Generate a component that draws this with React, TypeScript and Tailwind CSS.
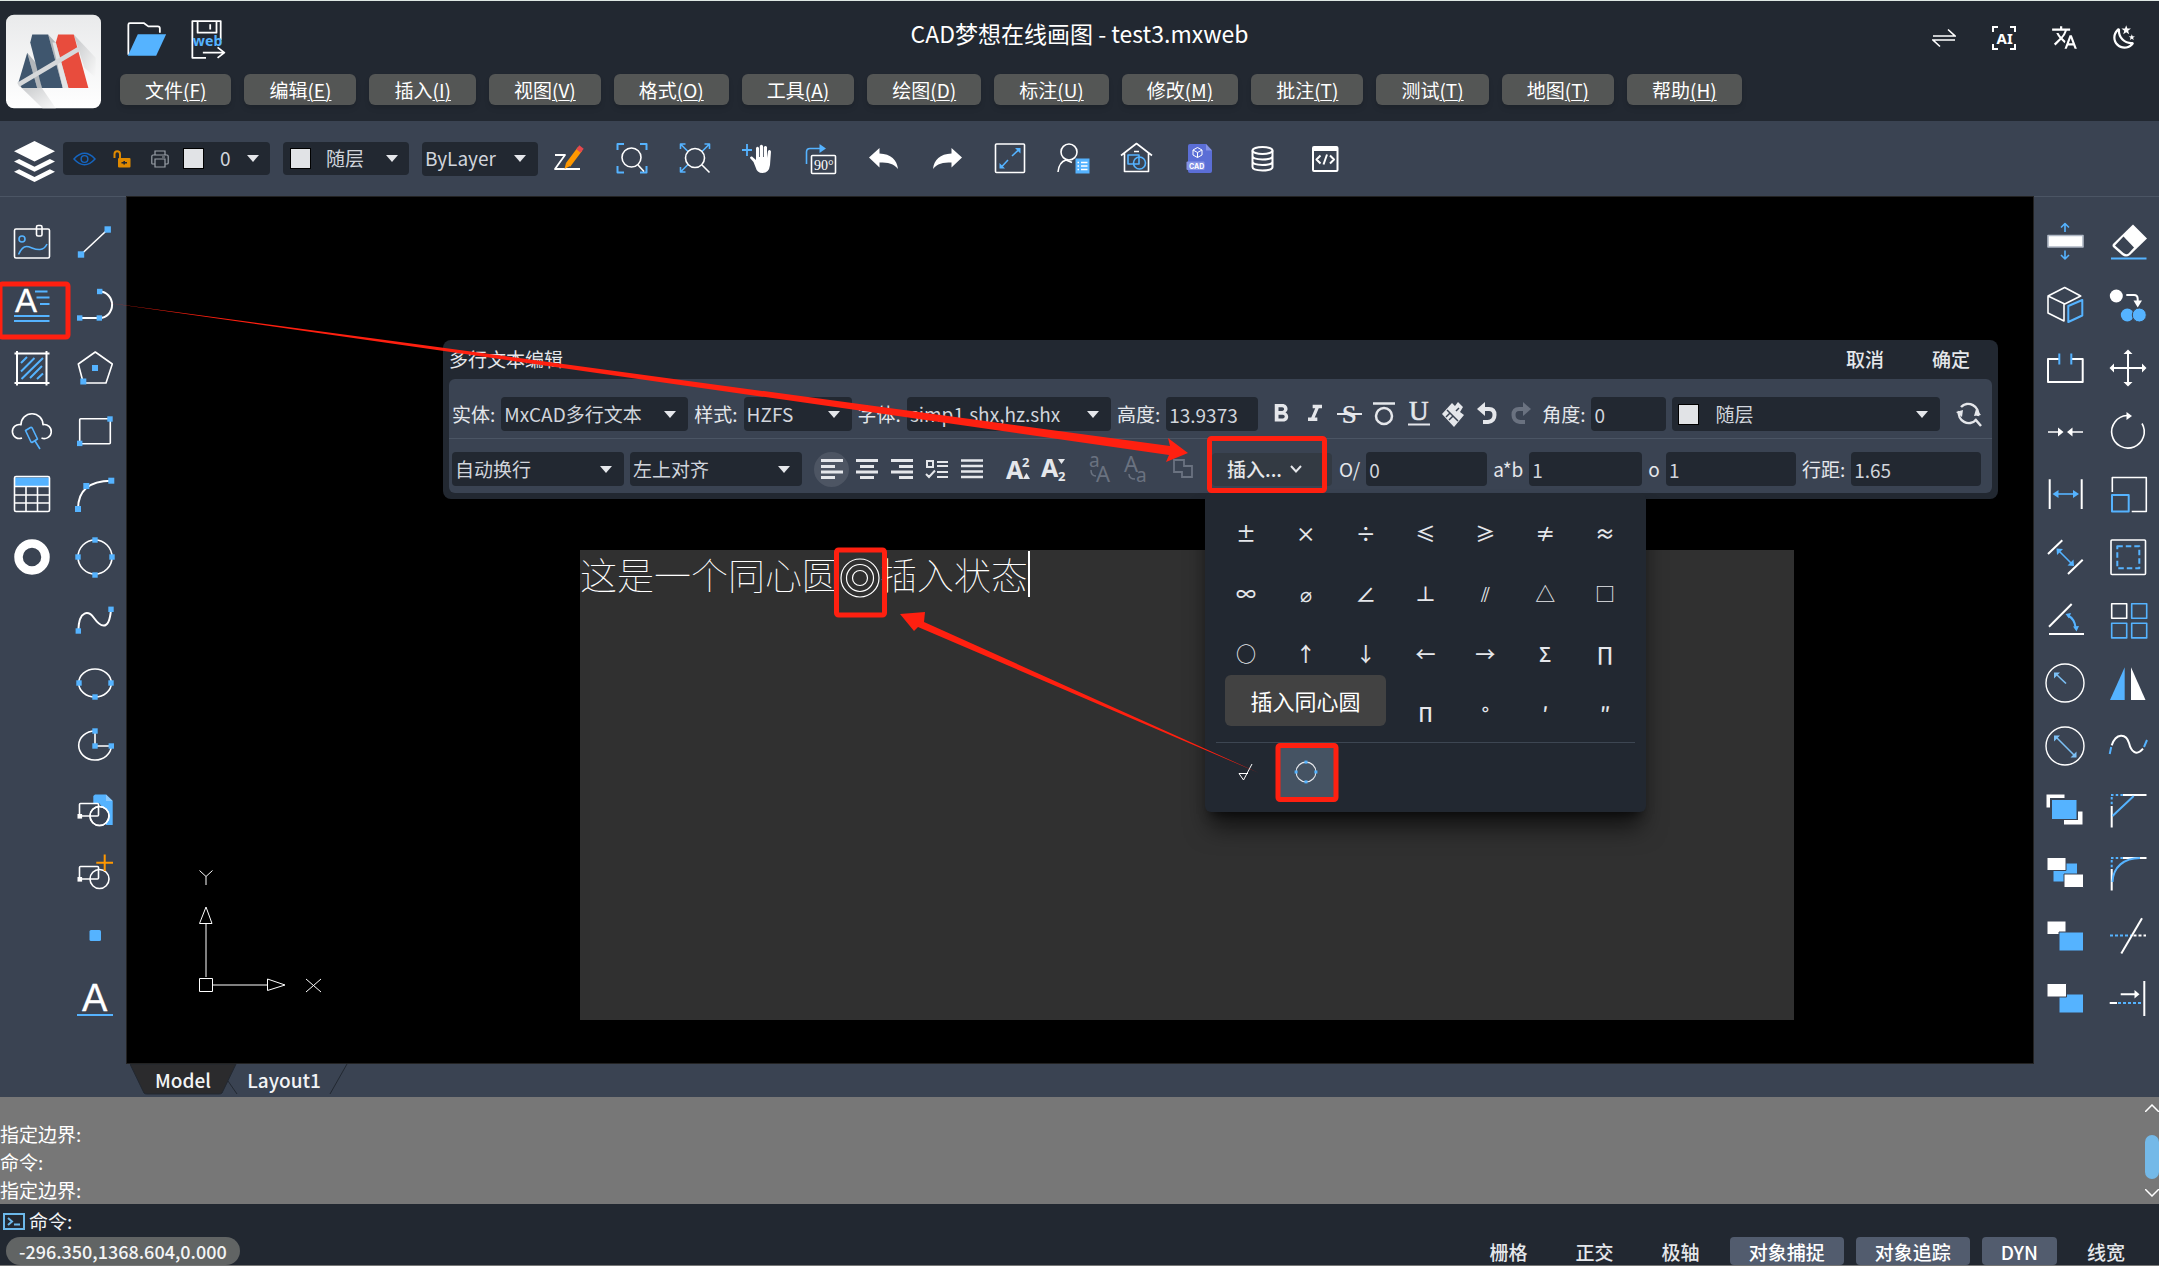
import type { ReactNode } from 'react';
import { MdFormatBold, MdFormatItalic, MdTranslate } from 'react-icons/md';
import clsx from 'clsx';

const BLUE = '#55b3ff';
const PANEL = '#3a4352';

function Icon({ children, className = 'size-10' }: { children: ReactNode; className?: string }) {
  return (
    <svg viewBox="0 0 40 40" className={clsx('shrink-0 overflow-visible', className)} fill="none" stroke="currentColor" strokeWidth="1.6" strokeLinejoin="round" aria-hidden="true">
      {children}
    </svg>
  );
}

// grip squares drawn at the key points of a shape
function Grips({ at, size = 5.4 }: { at: number[][]; size?: number }) {
  return (
    <g fill={BLUE} stroke="none">
      {at.map(([x, y]) => (
        <rect key={`${x}-${y}`} x={x - size / 2} y={y - size / 2} width={size} height={size} />
      ))}
    </g>
  );
}

function Caret() {
  return (
    <svg viewBox="0 0 12 7" className="pointer-events-none h-[7px] w-3 shrink-0 fill-gray-200" aria-hidden="true">
      <path d="M0 0H12L6 7Z" />
    </svg>
  );
}

const menus = [
  ['文件', 'F'],
  ['编辑', 'E'],
  ['插入', 'I'],
  ['视图', 'V'],
  ['格式', 'O'],
  ['工具', 'A'],
  ['绘图', 'D'],
  ['标注', 'U'],
  ['修改', 'M'],
  ['批注', 'T'],
  ['测试', 'T'],
  ['地图', 'T'],
  ['帮助', 'H'],
];

const blockShape = (
  <>
    <rect x="4.5" y="14.5" width="19" height="12.5" rx="1" />
    <circle cx="24.5" cy="27" r="9.5" />
    <rect x="2.5" y="25" width="4.6" height="4.6" fill="white" stroke="none" />
  </>
);

const leftCol = [
  {
    name: '图像',
    icon: (
      <>
        <rect x="2.5" y="7" width="35" height="29" rx="1.5" />
        <rect x="24.5" y="3.5" width="5.5" height="10.5" rx="1.5" />
        <g stroke={BLUE}>
          <circle cx="10" cy="17" r="3" />
          <path d="M6.5 32.5C9 27 11 24.5 14.5 24.5C19 24.5 22 28 28 27.5C33 27 34 24 35 22" />
        </g>
      </>
    ),
  },
  {
    name: '多行文字',
    icon: (
      <>
        <text x="3" y="27" fontSize="33" fontFamily="Liberation Sans" fill="white" stroke="white" strokeWidth="0.3">A</text>
        <path stroke={BLUE} strokeWidth="1.9" d="M23 6.5H35.5M24.5 12.5H37.5M28 19H37.5M2 31H37.5M2 36H37.5" />
      </>
    ),
  },
  {
    name: '填充',
    icon: (
      <>
        <path strokeWidth="2" d="M5 3V37.5M34.5 3V37.5M2.5 5.5H37.5M2.5 35H37.5" />
        <path stroke={BLUE} strokeWidth="2" d="M9 15L15 9M9 23.5L22.5 10M9.5 31L31 10M18 30L30 18M25 31L31 25.5" />
      </>
    ),
  },
  {
    name: '云线',
    icon: (
      <>
        <path d="M10 27A7 7 0 1 1 9 13.7A11 11 0 0 1 31 13.7A7 7 0 1 1 29.5 27" />
        <path stroke={BLUE} d="M13.5 19.5L18.5 16.5Q19.5 16.2 20.2 17L25.5 28L20 31.5L19 31ZM23 30L28 38" />
      </>
    ),
  },
  {
    name: '表格',
    icon: (
      <>
        <rect x="3" y="3.5" width="34" height="9" fill={BLUE} stroke="none" />
        <rect x="2.5" y="2.5" width="35" height="35" rx="1.5" />
        <path d="M2.5 12.5H37.5M2.5 21H37.5M2.5 29H37.5M14 12.5V37.5M25.5 12.5V37.5" />
      </>
    ),
  },
  { name: '圆环', icon: <circle cx="20" cy="20" r="13.5" strokeWidth="8.5" /> },
];

const drawCol = [
  { name: '直线', icon: <><path d="M6 32.5L32.7 7.5" /><Grips at={[[6, 32.5], [32.7, 7.5]]} size={6.4} /></> },
  { name: '多段线', icon: <><path strokeWidth="2" d="M4.7 33H24.5A12.5 13.25 0 0 0 24.7 6.5" /><Grips at={[[4.7, 33], [24.3, 33], [24.7, 6.5]]} /></> },
  { name: '多边形', icon: <><path d="M20.3 4L37.3 16L31 35H8.3L3.3 16Z" /><Grips at={[[20, 20], [8.3, 33.5]]} size={6} /></> },
  { name: '矩形', icon: <><rect x="4.7" y="7.7" width="30.6" height="25" rx="1" /><Grips at={[[35, 8], [4.7, 32.4]]} /></> },
  { name: '圆弧', icon: <><path strokeWidth="2" d="M3 35Q3 7 36.3 6.7" /><Grips at={[[3, 35], [11.3, 12], [36.3, 6.7]]} size={6} /></> },
  { name: '圆', icon: <><circle cx="20" cy="20" r="17" /><Grips at={[[3, 20], [20, 3], [37, 20], [20, 38]]} /></> },
  { name: '样条曲线', icon: <><path strokeWidth="2" d="M3.3 30.7C4 9 14 11 19 18S34 34 36 9.3" /><Grips at={[[3.3, 31], [36, 9.3]]} /></> },
  { name: '椭圆', icon: <><ellipse cx="20" cy="20" rx="16.3" ry="14" /><Grips at={[[4, 20], [36, 20], [20, 34]]} /></> },
  { name: '椭圆弧', icon: <><path d="M20 5A16.3 14.5 0 1 0 36.3 20H20Z" /><Grips at={[[20, 5], [20, 20], [36.3, 20]]} /></> },
  {
    name: '插入块',
    icon: (
      <>
        <path fill={BLUE} stroke="none" d="M20 5.5H31L37.7 12V36H31L30 33L34 27L24 14H18.3V7Z" />
        <path fill="#8cc9fb" stroke="none" d="M31 5.5L37.7 12H31Z" />
        <circle cx="24.5" cy="27" r="9.5" fill={PANEL} />
        {blockShape}
      </>
    ),
  },
  { name: '创建块', icon: <>{blockShape}<path stroke="#ff9800" strokeWidth="2" d="M21.3 10.7H38M29.7 2.5V19" /></> },
  { name: '点', icon: <rect x="14.5" y="15" width="11.5" height="11" rx="1.5" fill={BLUE} stroke="none" /> },
  {
    name: '单行文字',
    icon: (
      <>
        <text x="7" y="32.5" fontSize="38" fontFamily="Liberation Sans" fill="white" stroke="white" strokeWidth="0.3">A</text>
        <path stroke={BLUE} strokeWidth="2" d="M2 37H38" />
      </>
    ),
  },
];

const modifyCol = [
  {
    name: '拉伸',
    icon: (
      <>
        <rect x="3" y="13.5" width="35" height="11.5" fill="white" stroke="#aeb7c4" />
        <path stroke={BLUE} d="M20 10V1.5M16 5.5L20 1.5L24 5.5M20 28.5V37M16 33L20 37L24 33" />
      </>
    ),
  },
  { name: '三维', icon: <><path d="M19.7 2.5L35.7 11L19.7 19L3 11ZM3 11V28L19 36V19" /><path stroke={BLUE} strokeWidth="2" d="M23.3 21L37.3 15V30.5L23.3 37Z" /></> },
  { name: '打断', icon: <><path strokeWidth="2" d="M14.3 11H3V34H37.7V11H26.3" /><path stroke={BLUE} strokeWidth="2" d="M14.3 5.5V16.5M26.3 5.5V16.5" /></> },
  { name: '合并', icon: <><path d="M3 21H14M38 21H26" /><path fill="white" stroke="none" d="M13 16.5L18.5 21L13 25.5ZM27.5 16.5L22 21L27.5 25.5Z" /></> },
  { name: '线性标注', icon: <><path strokeWidth="2" d="M4.7 5.3V35M36.7 5.3V35" /><path stroke={BLUE} d="M12 20H30" /><path fill={BLUE} stroke="none" d="M13.5 16L7.5 20L13.5 24ZM28 16L34 20L28 24Z" /></> },
  { name: '对齐标注', icon: <><path strokeWidth="2" d="M3 17L17.3 3.3M23 37L37.7 22.7" /><path stroke={BLUE} d="M13 13L27 27" /><path fill={BLUE} stroke="none" d="M11.5 11.5L18 12L12 18ZM29 29L28.5 22.5L22.5 28.5Z" /></> },
  { name: '角度标注', icon: <><path strokeWidth="2" d="M4 26.7L26.7 4M4 34H39" /><path stroke={BLUE} strokeWidth="2" d="M23 15.5C28 18 30 22 30.7 28" /><path fill={BLUE} stroke="none" d="M20.5 14L26 13L24 18.5ZM31.5 31.5L28 26.5L34 26Z" /></> },
  { name: '半径标注', icon: <><circle cx="20" cy="20" r="19" strokeWidth="1.4" /><path stroke="#7cc0f5" d="M21 20.5L12 12" /><path fill="#7cc0f5" stroke="none" d="M9 9.5H15L9 15.5Z" /></> },
  { name: '直径标注', icon: <><circle cx="20" cy="20" r="19" strokeWidth="1.4" /><path stroke="#7cc0f5" d="M12 12L29 29" /><path fill="#7cc0f5" stroke="none" d="M9 9.5H15L9 15.5ZM31.5 31.5V25.5L25.5 31.5Z" /></> },
  { name: '前置', icon: <g stroke={PANEL} strokeWidth="1"><rect x="1" y="5" width="19" height="14" fill="white" /><rect x="18.5" y="22" width="19.5" height="14" fill="white" /><rect x="5" y="9" width="28" height="22" fill={PANEL} stroke="none" /><rect x="7" y="11" width="24.5" height="19" fill={BLUE} stroke="none" /></g> },
  { name: '后置', icon: <g stroke={PANEL} strokeWidth="1"><rect x="8" y="11" width="24.5" height="19" fill={BLUE} /><rect x="2" y="5.5" width="19" height="13" fill="white" /><rect x="19" y="22" width="19.5" height="13.5" fill="white" /></g> },
  { name: '置于对象之上', icon: <g stroke={PANEL} strokeWidth="1"><rect x="2" y="6" width="19" height="13.5" fill="white" /><rect x="14" y="17" width="24.5" height="19" fill={BLUE} /></g> },
  { name: '置于对象之下', icon: <g stroke={PANEL} strokeWidth="1"><rect x="14" y="16" width="24.5" height="19" fill={BLUE} /><rect x="2" y="5.5" width="19.5" height="13.5" fill="white" /></g> },
];

const cornerLines = (
  <>
    <path strokeWidth="2" d="M15 6H38.5M3.7 17V38.5" />
    <path stroke={BLUE} strokeWidth="2" strokeDasharray="2.5 2.2" d="M3 6H15M3.7 8V17" />
  </>
);

const editCol = [
  {
    name: '删除',
    icon: (
      <>
        <path fill="white" stroke="none" d="M25 2.5L39 16.5L22 33Q18 36 14 33L5 25Q4 23.5 5 22Z" />
        <path fill={PANEL} stroke="none" d="M15.5 14.5L26 25.5L20.5 31.5Q18 33 15.5 31L7 23.5Z" />
        <path stroke={BLUE} strokeWidth="2" d="M3 36.5H38.5" />
      </>
    ),
  },
  {
    name: '复制',
    icon: (
      <>
        <circle cx="8.3" cy="11" r="6.5" fill="white" stroke="none" />
        <path strokeWidth="2" d="M18.3 10H26Q29.7 10 29.7 14V17" />
        <path fill="white" stroke="none" d="M25.5 15.5H34L29.7 22.5Z" />
        <circle cx="19.3" cy="30" r="6.5" fill={BLUE} stroke="none" />
        <circle cx="31.3" cy="30" r="7" fill={BLUE} stroke={PANEL} strokeWidth="1" />
      </>
    ),
  },
  { name: '移动', icon: <><path strokeWidth="2" d="M4 20H36M20 4V36" /><path fill="white" stroke="none" d="M1.5 20L6 15.5V24.5ZM38.5 20L34 15.5V24.5ZM20 1.5L15.5 6H24.5ZM20 38.5L15.5 34H24.5Z" /></> },
  { name: '旋转', icon: <><path d="M19 4.5A16.3 16.3 0 1 0 34 12.5" /><path fill="white" stroke="none" d="M18.5 1L24 5L18.5 9Z" /></> },
  { name: '缩放', icon: <><path d="M4.3 18V3.5H38.3V37.5H23.7" /><rect x="4" y="21" width="16.7" height="16.5" stroke={BLUE} strokeWidth="2" /></> },
  { name: '选择', icon: <><rect x="3" y="3" width="34.5" height="34.5" rx="1" /><rect x="9.3" y="9.3" width="22" height="22" stroke={BLUE} strokeWidth="2" strokeDasharray="5.5 3" /></> },
  { name: '阵列', icon: <><rect x="3.7" y="3.7" width="15" height="14.6" /><g stroke={BLUE}><rect x="23.7" y="3.7" width="15" height="14.6" /><rect x="3.7" y="23.3" width="15" height="14.6" /><rect x="23.7" y="23.3" width="15" height="14.6" /></g></> },
  { name: '镜像', icon: <g stroke="none"><path fill={BLUE} d="M16.7 4.3V37H2Z" /><path fill="white" d="M23 4.3V37H37.5Z" /></g> },
  { name: '样条', icon: <><path strokeWidth="2" d="M3.7 19.3C8 7 18 7 21 17C23 25 28 31 35 22.7" /><path stroke={BLUE} strokeWidth="2" d="M1.7 28L3.2 21M36 21L39 14" /></> },
  { name: '倒角', icon: <>{cornerLines}<path stroke={BLUE} strokeWidth="2" d="M25.7 7L4.5 27" /></> },
  { name: '圆角', icon: <>{cornerLines}<path stroke={BLUE} strokeWidth="2" d="M32 6C16 6 5 15 4.5 30" /></> },
  { name: '修剪', icon: <><path stroke={BLUE} strokeWidth="2" strokeDasharray="3 2" d="M2 20.5H23" /><path strokeWidth="2" strokeDasharray="3 2" d="M25.5 20.5H38" /><path strokeWidth="2" d="M34 3.3L13.3 38.5" /></> },
  { name: '延伸', icon: <><path strokeWidth="2" d="M36.3 3V38M12.7 16.3H28M1.7 25H9" /><path fill="white" stroke="none" d="M26.5 12L31.5 16.3L26.5 20.5Z" /><path stroke={BLUE} strokeWidth="2" strokeDasharray="3 2" d="M10 25H35" /></> },
];

const viewTools = [
  {
    name: '绘制',
    icon: (
      <>
        <path d="M6 17H16L6 31H31" strokeWidth="1.8" />
        <path d="M19 27L31 11" stroke="#ff9800" strokeWidth="5.5" />
        <path d="M29.5 13L32.5 9" stroke="#e5484d" strokeWidth="5.5" />
        <path d="M15.5 31L17 25L21 28Z" fill="#ff9800" stroke="none" />
      </>
    ),
  },
  { name: '窗口缩放', icon: <><path stroke={BLUE} strokeWidth="2" d="M5.5 12V6H12M28 6H34.5V12M34.5 28V34.5H28M12 34.5H5.5V28" /><circle cx="19.5" cy="19.5" r="9.5" /><path d="M26 27L32 33.5" /></> },
  { name: '范围缩放', icon: <><path stroke={BLUE} d="M5.5 6L13 13.5M5.5 11V6H10.5M34.5 6L27 13.5M29.5 6H34.5V11M5.5 34L13 26.5M5.5 29V34H10.5" /><circle cx="20" cy="20" r="9.5" /><path d="M27 27L34.5 34.5" /></> },
  {
    name: '平移',
    icon: (
      <>
        <path stroke={BLUE} strokeWidth="1.8" d="M4 12H14M9 6V18" />
        <path fill="white" stroke="none" d="M15.5 24L12 20Q12 18 14 18.5L18 22V10Q19.5 7.5 21 10V19H21.8V8Q23.5 5.5 25 8V19H25.8V9Q27.5 7 29 9V20L30 13Q31.7 11 33 13.5L32 27Q31 35 24.5 35Q19 35 17.5 29Z" />
      </>
    ),
  },
  {
    name: '旋转视图',
    icon: (
      <>
        <path stroke={BLUE} d="M5.5 26V14Q5.5 10.5 9 10.5H19" />
        <path fill={BLUE} stroke="none" d="M18.5 6L25 10.5L18.5 15Z" />
        <rect x="10.5" y="17.5" width="24" height="18" rx="1" />
        <text x="13" y="32" fontSize="14" fontFamily="Liberation Serif" fill="white" stroke="none">90°</text>
      </>
    ),
  },
  { name: '放弃', icon: <path fill="white" stroke="none" d="M5 19.5L15.5 10V15.5C27 16 33 22 34 31C30 25.5 24 24.5 15.5 24.5V29.5Z" /> },
  { name: '重做', icon: <path fill="white" stroke="none" d="M35 19.5L24.5 10V15.5C13 16 7 22 6 31C10 25.5 16 24.5 24.5 24.5V29.5Z" /> },
  { name: '全屏', icon: <><rect x="5.5" y="6" width="29" height="28.5" rx="1" /><path stroke={BLUE} d="M22 18L29 11.5M18 22L11 29.5" /><path fill={BLUE} stroke="none" d="M25 10H30.5V15.5ZM9.5 25V30.5H15Z" /></> },
  { name: '用户', icon: <><circle cx="16" cy="14" r="8" /><path d="M5 34Q6 24 13 22L19 24.5" /><rect x="22.5" y="20.5" width="14" height="15" fill={BLUE} stroke="none" /><path d="M28 24.5H34.5M28 28H34.5M28 31.5H34.5M24.5 24.5H26M24.5 28H26M24.5 31.5H26" /></> },
  { name: '图库', icon: <><path d="M5 17.5L20.5 5.5L36 17.5M8.5 15.5V33.5H32.5V15.5M18 13.5H23" /><g stroke={BLUE}><rect x="12" y="17" width="11" height="9" /><circle cx="23.5" cy="25" r="6" /></g></> },
  {
    name: 'CAD 文件',
    icon: (
      <>
        <path fill="#5b6ed6" stroke="none" d="M11 6H27L33 12.5V33Q33 35 31 35H11Q9 35 9 33V8Q9 6 11 6Z" />
        <path fill="#8492e6" stroke="none" d="M27 6L33 12.5H27Z" />
        <path strokeWidth="1" d="M18.5 9.5L23 12V17L18.5 19.5L14 17V12ZM14 12L18.5 14.5L23 12M18.5 14.5V19.5" />
        <rect x="7.5" y="23.5" width="18" height="8.5" rx="1" fill="#8492e6" stroke="none" />
        <text x="10" y="30.5" fontSize="7" fontWeight="700" fontFamily="Inter" fill="white" stroke="none">CAD</text>
      </>
    ),
  },
  { name: '数据库', icon: <g strokeWidth="2"><ellipse cx="20.5" cy="12.5" rx="10" ry="3.5" /><path d="M10.5 12.5V29C10.5 33.5 30.5 33.5 30.5 29V12.5M10.5 18C10.5 22.5 30.5 22.5 30.5 18M10.5 23.5C10.5 28 30.5 28 30.5 23.5" /></g> },
  { name: '代码', icon: <><rect x="8" y="9" width="24.5" height="24" rx="1" strokeWidth="2" /><path strokeWidth="4" d="M8 11H32.5" /><path strokeWidth="2" d="M15.5 17.5L11.5 21.5L15.5 25.5M25 17.5L29 21.5L25 25.5M22 16.5L18.5 26.5" /></> },
];

const symbols = ['±', '×', '÷', '≤', '≥', '≠', '≈', '∞', '⌀', '∠', '⊥', '⫽', '△', '□', '○', '↑', '↓', '←', '→', 'Σ', '∏', '', '', '', 'Π', '°', '′', '″'];

const statusItems = [
  { label: '栅格', on: false },
  { label: '正交', on: false },
  { label: '极轴', on: false },
  { label: '对象捕捉', on: true },
  { label: '对象追踪', on: true },
  { label: 'DYN', on: true },
  { label: '线宽', on: false },
];

function ToolColumn({ tools }: { tools: { name: string; icon: ReactNode }[] }) {
  return (
    <div className="flex w-[63px] flex-col">
      {tools.map((tool) => (
        <button key={tool.name} type="button" aria-label={tool.name} className="flex h-[63px] items-center justify-center">
          <Icon>{tool.icon}</Icon>
        </button>
      ))}
    </div>
  );
}

function Dropdown({ label, value, width, className }: { label: string; value: string; width: string; className?: string }) {
  return (
    <div className={clsx('flex h-[34px] items-center rounded bg-[#222831] pr-3', width, className)}>
      <select aria-label={label} defaultValue={value} className="min-w-0 flex-1 appearance-none bg-transparent pl-[3px] text-gray-300 outline-none">
        <option>{value}</option>
      </select>
      <Caret />
    </div>
  );
}

function Field({ label, value, width }: { label: string; value: string; width: string }) {
  return (
    <label className="flex items-center gap-1.5">
      {label}
      <input type="text" defaultValue={value} className={clsx('h-[34px] rounded bg-[#222831] px-[3px] text-gray-300 outline-none', width)} />
    </label>
  );
}

function FormatButton({ name, children, active, muted }: { name: string; children: ReactNode; active?: boolean; muted?: boolean }) {
  return (
    <button
      type="button"
      aria-label={name}
      className={clsx('flex size-[35px] items-center justify-center rounded-full', active && 'bg-[#4d5563]', muted ? 'text-[#6a7280]' : 'text-gray-200')}
    >
      {children}
    </button>
  );
}

function Glyph({ children }: { children: ReactNode }) {
  return (
    <svg viewBox="0 0 30 30" className="size-[30px] overflow-visible" fill="none" stroke="currentColor" strokeWidth="3" aria-hidden="true">
      {children}
    </svg>
  );
}

function Swatch() {
  return <span className="size-[21px] shrink-0 border border-black bg-[#e1e3e6]" />;
}

function Header() {
  return (
    <header className="flex h-[121px] shrink-0 border-t border-[#dfe8e4] bg-[#222831] pl-1.5">
      <svg viewBox="0 0 286 282" className="relative z-10 mt-[13px] size-[95px] shrink-0" aria-label="logo">
        <defs>
          <linearGradient id="logo-bg" x1="0" y1="0" x2="0" y2="1">
            <stop offset="0" stopColor="#e9eaeb" />
            <stop offset="1" stopColor="#ffffff" />
          </linearGradient>
          <linearGradient id="logo-shade" x1="0" y1="0" x2="1" y2="1">
            <stop offset="0" stopColor="#c4c6c8" />
            <stop offset="1" stopColor="#f9f9f9" />
          </linearGradient>
        </defs>
        <rect width="286" height="282" rx="24" fill="url(#logo-bg)" />
        <path d="M204 60L270 130V190L236 160Z" fill="url(#logo-shade)" />
        <path d="M37 211L110 282H150L108 221Z" fill="url(#logo-shade)" />
        <path d="M64 115L94 150L108 221H94ZM127 60L160 95L190 221H171Z" fill="#b2b6ba" />
        <path d="M79 60H127L171 221H108L73 84Z" fill="#3f566e" />
        <path d="M64 115L94 221H48L37 206Z" fill="#3f566e" />
        <path d="M157 60H204L248 221H188L150 84Z" fill="#e84c3d" />
        <path d="M140 84L150 84L188 221H171Z" fill="#e3e4e5" />
        <path d="M37 211L219 103" stroke="#d6d8da" strokeWidth="14" />
      </svg>
      <div className="flex flex-1 flex-col pl-[19px]">
        <div className="-ml-[120px] grid h-[73px] grid-cols-[1fr_auto_1fr] items-center pb-1">
          <div className="flex items-center gap-[22px] pt-2 pl-[121px]">
            <button type="button" aria-label="打开文件">
              <Icon className="size-[42px]">
                <path strokeWidth="1.7" d="M7 34V5.5Q7 4 8.5 4H22L26 7H35Q37 7 37 9V13" />
                <path fill={BLUE} stroke="none" d="M16 14.5H43L33.5 35H6.5Z" />
              </Icon>
            </button>
            <button type="button" aria-label="保存 web">
              <Icon className="size-[42px]">
                <path strokeWidth="1.7" d="M20 37H7V2H34V20M12 2V13H30V2M24 5V10M17 32H37M31 27L37.5 32L31 37" />
                <text x="7.5" y="26" fontSize="13.5" fontWeight="700" fontFamily="Noto Sans" fill={BLUE} stroke="none">web</text>
              </Icon>
            </button>
          </div>
          <h1 className="pb-1.5 text-[23px] leading-8 text-white">CAD梦想在线画图 - test3.mxweb</h1>
          <div className="flex items-center justify-end pt-1 pr-[5px]">
            <button type="button" aria-label="切换" className="flex w-[60px] justify-center">
              <svg viewBox="0 0 24 24" className="size-6" fill="none" stroke="white" strokeWidth="1.6"><path d="M1 10H23L16 3.5M23 14H1L8 20.5" /></svg>
            </button>
            <button type="button" aria-label="AI" className="flex w-[60px] justify-center">
              <svg viewBox="0 0 24 24" className="size-6 overflow-visible" fill="none" stroke="white" strokeWidth="2">
                <path d="M1 6V1H6M18 1H23V6M23 18V23H18M6 23H1V18" />
                <text x="4.5" y="17.5" fontSize="15" fontWeight="700" fontFamily="Noto Sans" fill="white" stroke="none">AI</text>
              </svg>
            </button>
            <button type="button" aria-label="语言" className="flex w-[60px] justify-center"><MdTranslate size={27} color="white" /></button>
            <button type="button" aria-label="主题" className="flex w-[60px] justify-center">
              <svg viewBox="0 0 24 24" className="size-[27px] fill-white">
                <path d="M17.75 4.09L15.22 6.03L16.13 9.09L13.5 7.28L10.87 9.09L11.78 6.03L9.25 4.09L12.44 4L13.5 1L14.56 4L17.75 4.09M21.25 11L19.61 12.25L20.2 14.23L18.5 13.06L16.8 14.23L17.39 12.25L15.75 11L17.81 10.95L18.5 9L19.19 10.95L21.25 11M18.97 15.95C19.8 15.87 20.69 17.05 20.16 17.8C19.84 18.25 19.5 18.67 19.08 19.07C15.17 23 8.84 23 4.94 19.07C1.03 15.17 1.03 8.83 4.94 4.93C5.34 4.53 5.76 4.17 6.21 3.85C6.96 3.32 8.14 4.21 8.06 5.04C7.79 7.9 8.75 10.87 10.95 13.06C13.14 15.26 16.1 16.22 18.97 15.95M17.33 17.97C14.5 17.81 11.7 16.64 9.53 14.5C7.36 12.31 6.2 9.5 6.04 6.68C3.23 9.82 3.34 14.64 6.35 17.66C9.37 20.67 14.19 20.78 17.33 17.97Z" />
              </svg>
            </button>
          </div>
        </div>
        <nav className="flex gap-[13px]">
          {menus.map(([label, key]) => (
            <button key={label} type="button" className="h-[31px] rounded-md bg-[#545655] px-[25px] text-[19px] leading-7 whitespace-nowrap text-white shadow-md">
              {label}
              <span className="underline decoration-1 underline-offset-2">({key})</span>
            </button>
          ))}
        </nav>
      </div>
    </header>
  );
}

function Toolbar() {
  return (
    <div className="flex h-[75px] shrink-0 items-center bg-[#3a4352] pl-[14px] text-[19px]">
      <button type="button" aria-label="图层" className="mt-1.5">
        <svg viewBox="0 0 40 40" className="size-[41px] fill-white">
          <path d="M20 0L40 10L20 20L0 10ZM5 17.5L20 25L35 17.5L40 20L20 30L0 20ZM5 27.5L20 35L35 27.5L40 30L20 40L0 30Z" />
        </svg>
      </button>
      <div className="ml-2 flex h-[33px] w-[207px] items-center rounded bg-[#222831] pr-[11px] pl-2.5">
        <svg viewBox="0 0 24 14" className="mr-[17px] h-[14px] w-[23px]" fill="none" stroke="#1565c0" strokeWidth="1.5">
          <path d="M1 7Q12 -5 23 7Q12 19 1 7Z" />
          <circle cx="12" cy="7" r="3.5" />
        </svg>
        <svg viewBox="0 0 18 18" className="mr-5 size-[18px]">
          <path d="M1.5 8V4Q1.5 1.2 4.2 1.2T7 4V9" fill="none" stroke="#e08a00" strokeWidth="2" />
          <rect x="5" y="8" width="12.5" height="9.5" rx="1" fill="#e08a00" />
          <path d="M8.5 12.7H14M11.2 11V14.5" stroke="#222831" strokeWidth="1.6" />
        </svg>
        <svg viewBox="0 0 18 18" className="mr-[14px] size-[18px]" fill="none" stroke="#9aa0a8" strokeWidth="1.2">
          <path d="M4 5V1H14V5M4 14H1.5Q.8 14 .8 13V6.5Q.8 5 2 5H16Q17.2 5 17.2 6.5V13Q17.2 14 16 14H14M4 9H14V17H4ZM11 7H14" />
        </svg>
        <Swatch />
        <select aria-label="图层" className="ml-4 min-w-0 flex-1 appearance-none bg-transparent text-gray-300 outline-none">
          <option>0</option>
        </select>
        <Caret />
      </div>
      <div className="ml-[13px] flex h-[33px] w-[126px] items-center rounded bg-[#222831] pr-[11px] pl-[7px]">
        <Swatch />
        <select aria-label="颜色" className="ml-[15px] min-w-0 flex-1 appearance-none bg-transparent text-gray-300 outline-none">
          <option>随层</option>
        </select>
        <Caret />
      </div>
      <Dropdown label="线型" value="ByLayer" width="w-[116px]" className="ml-[13px]" />
      <div className="-ml-px flex pb-0.5">
        {viewTools.map((tool) => (
          <button key={tool.name} type="button" aria-label={tool.name} className="flex w-[63px] justify-center">
            <Icon>{tool.icon}</Icon>
          </button>
        ))}
      </div>
    </div>
  );
}

function TextEditor() {
  return (
    <section className="absolute top-[143px] left-[316px] w-[1555px] rounded-lg bg-[#222831] px-1.5 pb-1.5 text-[19px] text-gray-200">
      <div className="flex h-[39px] items-center justify-between">
        <h2>多行文本编辑</h2>
        <div className="flex gap-12 pr-[22px] font-medium">
          <button type="button">取消</button>
          <button type="button">确定</button>
        </div>
      </div>
      <div className="rounded-md bg-[#3a4352]">
        <div className="flex h-[60px] items-center gap-1.5 border-b border-[#4b5564] px-[3px] pt-[17px] pb-1.5 whitespace-nowrap">
          <span>实体:</span>
          <Dropdown label="实体" value="MxCAD多行文本" width="w-[187px]" />
          <span>样式:</span>
          <Dropdown label="样式" value="HZFS" width="w-[108px]" />
          <span>字体:</span>
          <Dropdown label="字体" value="simp1.shx,hz.shx" width="w-[204px]" />
          <Field label="高度:" value="13.9373" width="w-[92px]" />
          <div className="flex [&>button]:w-[34px]">
            <FormatButton name="粗体"><MdFormatBold size={30} /></FormatButton>
            <FormatButton name="斜体"><MdFormatItalic size={28} /></FormatButton>
            <FormatButton name="删除线">
              <Glyph><text x="8" y="24" fontSize="26" fontFamily="Liberation Serif" fontWeight="700" fill="currentColor" stroke="none">S</text><path strokeWidth="2" d="M3 15H28" /></Glyph>
            </FormatButton>
            <FormatButton name="上划线">
              <Glyph><circle cx="16" cy="17" r="8" strokeWidth="2.5" /><path strokeWidth="2.5" d="M5 4.5H27" /></Glyph>
            </FormatButton>
            <FormatButton name="下划线">
              <Glyph><text x="7" y="21" fontSize="27" fontFamily="Liberation Serif" fill="currentColor" stroke="currentColor" strokeWidth="0.6">U</text><path strokeWidth="2" d="M6 25.5H28" /></Glyph>
            </FormatButton>
            <FormatButton name="格式刷">
              <Glyph>
                <path fill="currentColor" stroke="none" d="M6 15L16 4L19 7L22 3L27 8L24 13L28 16L18 28Z" />
                <path stroke="#3a4352" strokeWidth="1.5" d="M11 11L22 22M14 14L10 18M17 17L13 21M20 12L23 9" />
              </Glyph>
            </FormatButton>
            <FormatButton name="撤销"><Glyph><path strokeWidth="4" d="M13 10H19Q24.5 10 24.500 16T18 23H13" /><path fill="currentColor" stroke="none" d="M7 10L15 3V17Z" /></Glyph></FormatButton>
            <FormatButton name="恢复" muted><Glyph><path strokeWidth="4" d="M21 10H15Q9.5 10 9.500 16T16 23H21" /><path fill="currentColor" stroke="none" d="M27 10L19 3V17Z" /></Glyph></FormatButton>
          </div>
          <Field label="角度:" value="0" width="w-[75px]" />
          <div className="flex h-[34px] w-[268px] items-center rounded bg-[#222831] pr-3 pl-1.5">
            <Swatch />
            <select aria-label="文字颜色" className="ml-4 min-w-0 flex-1 appearance-none bg-transparent text-gray-300 outline-none">
              <option>随层</option>
            </select>
            <Caret />
          </div>
          <button type="button" aria-label="查找" className="ml-2">
            <Glyph><path d="M22 21A10 10 0 0 1 5 12M7 8A10 10 0 0 1 24 17M21 20L27 27" strokeWidth="2.5" /><path fill="currentColor" stroke="none" d="M2 13L9 11L8 18ZM27 16L20 17L22 10Z" /></Glyph>
          </button>
        </div>
        <div className="flex h-[54px] items-center gap-1.5 px-[3px] pt-1.5 whitespace-nowrap">
          <Dropdown label="换行" value="自动换行" width="w-[172px]" />
          <Dropdown label="对齐" value="左上对齐" width="w-[172px]" />
          <div className="flex gap-3 pr-px pl-1.5">
            <div className="flex">
              <FormatButton name="左对齐" active><Glyph><path d="M4 6.5H26M4 12.5H18M4 18H26M4 23.5H18" /></Glyph></FormatButton>
              <FormatButton name="居中"><Glyph><path d="M4 6.5H26M8 12.5H22M4 18H26M8 23.5H22" /></Glyph></FormatButton>
              <FormatButton name="右对齐"><Glyph><path d="M4 6.5H26M12 12.5H26M4 18H26M12 23.5H26" /></Glyph></FormatButton>
              <FormatButton name="编号"><Glyph><path strokeWidth="2" d="M5 7H11V13H5ZM4 20L7 23L13 16.5M15 8H26M15 12H26M15 18H26M15 23H26" /></Glyph></FormatButton>
              <FormatButton name="两端对齐"><Glyph><path d="M4 6.5H26M4 12H26M4 17.5H26M4 23H26" strokeWidth="2.6" /></Glyph></FormatButton>
            </div>
            <div className="flex">
              <FormatButton name="上标">
                <Glyph><g fill="currentColor" stroke="none" fontWeight="700" fontFamily="Noto Sans"><text x="2" y="25" fontSize="25">A</text><text x="18" y="13" fontSize="13">2</text><path d="M19 25L22.5 19L26 25Z" /></g></Glyph>
              </FormatButton>
              <FormatButton name="下标">
                <Glyph><g fill="currentColor" stroke="none" fontWeight="700" fontFamily="Noto Sans"><text x="2" y="23" fontSize="25">A</text><text x="19" y="27" fontSize="13">2</text><path d="M19 5L22.5 10L26 5Z" /></g></Glyph>
              </FormatButton>
            </div>
            <div className="flex">
              <FormatButton name="转大写" muted>
                <Glyph><g fill="currentColor" stroke="none" fontFamily="Noto Sans"><text x="3" y="13" fontSize="19">a</text><text x="10" y="28" fontSize="22">A</text></g><path strokeWidth="1.5" d="M5 16Q5 22 10 22" /></Glyph>
              </FormatButton>
              <FormatButton name="转小写" muted>
                <Glyph><g fill="currentColor" stroke="none" fontFamily="Noto Sans"><text x="3" y="18" fontSize="22">A</text><text x="15" y="28" fontSize="19">a</text></g><path strokeWidth="1.5" d="M8 20Q8 25 14 25" /></Glyph>
              </FormatButton>
            </div>
            <FormatButton name="合并" muted><Glyph><path strokeWidth="1.8" d="M6 6H16V12H24V23H14V18H6Z" /></Glyph></FormatButton>
            <button type="button" className="flex h-[33px] w-[120px] items-center gap-2 self-center rounded bg-[#333a43] pl-[15px] font-medium">
              插入...
              <svg viewBox="0 0 12 8" className="h-2 w-3" fill="none" stroke="currentColor" strokeWidth="2"><path d="M1 1L6 6.5L11 1" /></svg>
            </button>
          </div>
          <Field label="O/" value="0" width="w-[121px]" />
          <Field label="a*b" value="1" width="w-[113px]" />
          <Field label="o" value="1" width="w-[130px]" />
          <Field label="行距:" value="1.65" width="w-[130px]" />
        </div>
      </div>
    </section>
  );
}

function SymbolMenu() {
  return (
    <div className="absolute top-[296px] left-[1078px] w-[441px] rounded-md bg-[#222831] px-[11px] pt-[11px] pb-[15px] text-gray-200 shadow-xl shadow-black/60">
      <div className="-mb-0.5 grid grid-cols-7 text-[20px] font-medium">
        {symbols.map((symbol, i) => (
          <button key={i} type="button" className="flex h-[60px] items-center justify-center">
            {symbol}
          </button>
        ))}
      </div>
      <div className="flex border-t border-[#3d4652] pt-1">
        <button type="button" aria-label="粗糙度" className="flex h-[50px] w-[60px] items-center justify-center">
          <svg viewBox="0 0 16 18" className="h-[18px] w-4" fill="none" stroke="white" strokeWidth="1"><path d="M1 10.5H10M1 10.5L5.5 17L14 1" /></svg>
        </button>
        <button type="button" aria-label="插入同心圆" className="flex h-[50px] w-[60px] items-center justify-center bg-[#455363]">
          <Icon className="size-6"><circle cx="20" cy="20" r="16.5" strokeWidth="1.8" /><Grips at={[[20, 3.5], [3.5, 20], [36.5, 20], [20, 36.5]]} size={5} /></Icon>
        </button>
      </div>
      <div role="tooltip" className="absolute top-[182px] left-5 flex h-[51px] w-[161px] items-center justify-center rounded-md bg-[#424242] text-[22px] text-white">
        插入同心圆
      </div>
    </div>
  );
}

function Canvas() {
  return (
    <main className="relative min-w-0 flex-1 overflow-hidden border border-[#222] bg-black">
      <svg viewBox="0 0 130 132" className="absolute top-[671px] left-[68px] h-[132px] w-[130px]" fill="none" stroke="white" strokeWidth="1">
        <path d="M4.5 2.5L11 8.5L17.5 2.5M11 8.5V17M11 109V55M4.5 55.5H17L11 39ZM4.5 110.5H17.5V123.5H4.5ZM18 117H72M72.5 111V122.5L90 117ZM111 111L126 124M126 111L111 124" />
      </svg>
      <div
        role="textbox"
        aria-label="多行文本"
        contentEditable
        suppressContentEditableWarning
        className="absolute top-[353px] left-[453px] flex h-[470px] w-[1214px] items-start bg-[#303030] text-[37px] leading-[48px] font-thin text-white outline-none"
      >
        这是一个同心圆
        <svg viewBox="0 0 40 48" className="ml-px h-12 w-10" fill="none" stroke="white" strokeWidth="1.2">
          <circle cx="20" cy="28" r="19" />
          <circle cx="20" cy="28" r="13.5" />
          <circle cx="20" cy="28" r="7.5" />
        </svg>
        插入状态
        <span className="mt-px h-[46px] w-0.5 bg-white" />
      </div>
      <TextEditor />
      <SymbolMenu />
    </main>
  );
}

function SheetTabs() {
  return (
    <div className="relative flex h-[33px] shrink-0 bg-[#3a4352] pl-[130px] text-[19px] font-medium text-gray-100">
      <svg viewBox="0 0 220 33" className="absolute top-0 left-[130px] h-[33px] w-[220px]" stroke="#222831" fill="none">
        <path d="M0 0H106L92 29Q91 30 89 30H17Q15 30 14 29Z" fill="#2b2b2d" />
        <path d="M98 17L107 30M217 0L200 30" />
      </svg>
      <button type="button" className="relative w-[106px]">Model</button>
      <button type="button" className="relative w-[96px]">Layout1</button>
    </div>
  );
}

function CommandLine() {
  return (
    <>
      <div className="flex h-[107px] shrink-0 justify-between overflow-hidden bg-[#777] text-[19px] leading-7 text-white">
        <div className="flex flex-col justify-end">
          <p>指定边界:</p>
          <p>命令:</p>
          <p>指定边界:</p>
        </div>
        <div className="flex w-[14px] flex-col items-center justify-between py-[7px]">
          <svg viewBox="0 0 14 8" className="h-2 w-[14px]" fill="none" stroke="white" strokeWidth="1.5"><path d="M0 8L7 1L14 8" /></svg>
          <span className="mt-3 h-11 w-full rounded-full bg-[#74b9e8]" />
          <svg viewBox="0 0 14 8" className="h-2 w-[14px]" fill="none" stroke="white" strokeWidth="1.5"><path d="M0 0L7 7L14 0" /></svg>
        </div>
      </div>
      <label className="flex h-[33px] shrink-0 items-center gap-1 bg-[#222831] pt-px pl-[3px] text-[19px] text-gray-100">
        <svg viewBox="0 0 22 17" className="h-[17px] w-[22px]" fill="none" stroke="#6cb8ea" strokeWidth="2">
          <path d="M1 1H21V16H1ZM5 5L9 8.5L5 12M11 11.5H17" />
        </svg>
        命令:
        <input type="text" className="min-w-0 flex-1 bg-transparent outline-none" />
      </label>
    </>
  );
}

function StatusBar() {
  return (
    <footer className="flex h-[29px] shrink-0 items-stretch justify-between border-b border-[#777] bg-[#222831] pr-4 pl-1.5 text-[19px] font-medium">
      <output className="flex items-center rounded-full bg-[#616464] px-[13px] text-[18px] text-gray-100">-296.350,1368.604,0.000</output>
      <div className="flex gap-3">
        {statusItems.map((item) => (
          <button key={item.label} type="button" className={clsx('rounded pt-px leading-7', item.on ? 'bg-[#525c6e] px-[19px] text-white' : 'px-[18px] text-gray-200')}>
            {item.label}
          </button>
        ))}
      </div>
    </footer>
  );
}

// red callouts that walk through: mtext tool -> insert menu -> concentric circle
function Callouts() {
  return (
    <svg viewBox="0 0 2159 1266" className="pointer-events-none absolute top-0 left-0 h-[1266px] w-[2159px] max-w-none" fill="none" stroke="#ff2010" strokeWidth="5" aria-hidden="true">
      <rect x="0" y="284" width="68" height="53" rx="2" />
      <rect x="1209.5" y="438.5" width="115" height="52" rx="2" />
      <rect x="836.5" y="550" width="48" height="65" rx="2" />
      <rect x="1278" y="745.5" width="58" height="54" rx="2" />
      <g fill="#ff2010" stroke="none">
        <path d="M105 302.5L430 346L1170 446L1168 438L1188 453L1166 462L1169 455L430 349Z" />
        <path d="M1259 773L924 622L925 612L900 614L914 631L918 627Z" />
      </g>
    </svg>
  );
}

export default function App() {
  return (
    <div className="relative flex h-screen min-h-[1200px] flex-col overflow-hidden bg-[#222831] font-['Noto_Sans_CJK_SC',sans-serif] text-white">
      <Header />
      <Toolbar />
      <div className="flex min-h-0 flex-1">
        <aside className="flex w-[126px] shrink-0 border-t border-[#4b5564] bg-[#3a4352] pt-[13px]">
          <ToolColumn tools={leftCol} />
          <ToolColumn tools={drawCol} />
        </aside>
        <Canvas />
        <aside className="flex w-[125px] shrink-0 border-t border-[#4b5564] bg-[#3a4352] pt-[13px]">
          <ToolColumn tools={modifyCol} />
          <ToolColumn tools={editCol} />
        </aside>
      </div>
      <SheetTabs />
      <CommandLine />
      <StatusBar />
      <Callouts />
    </div>
  );
}
